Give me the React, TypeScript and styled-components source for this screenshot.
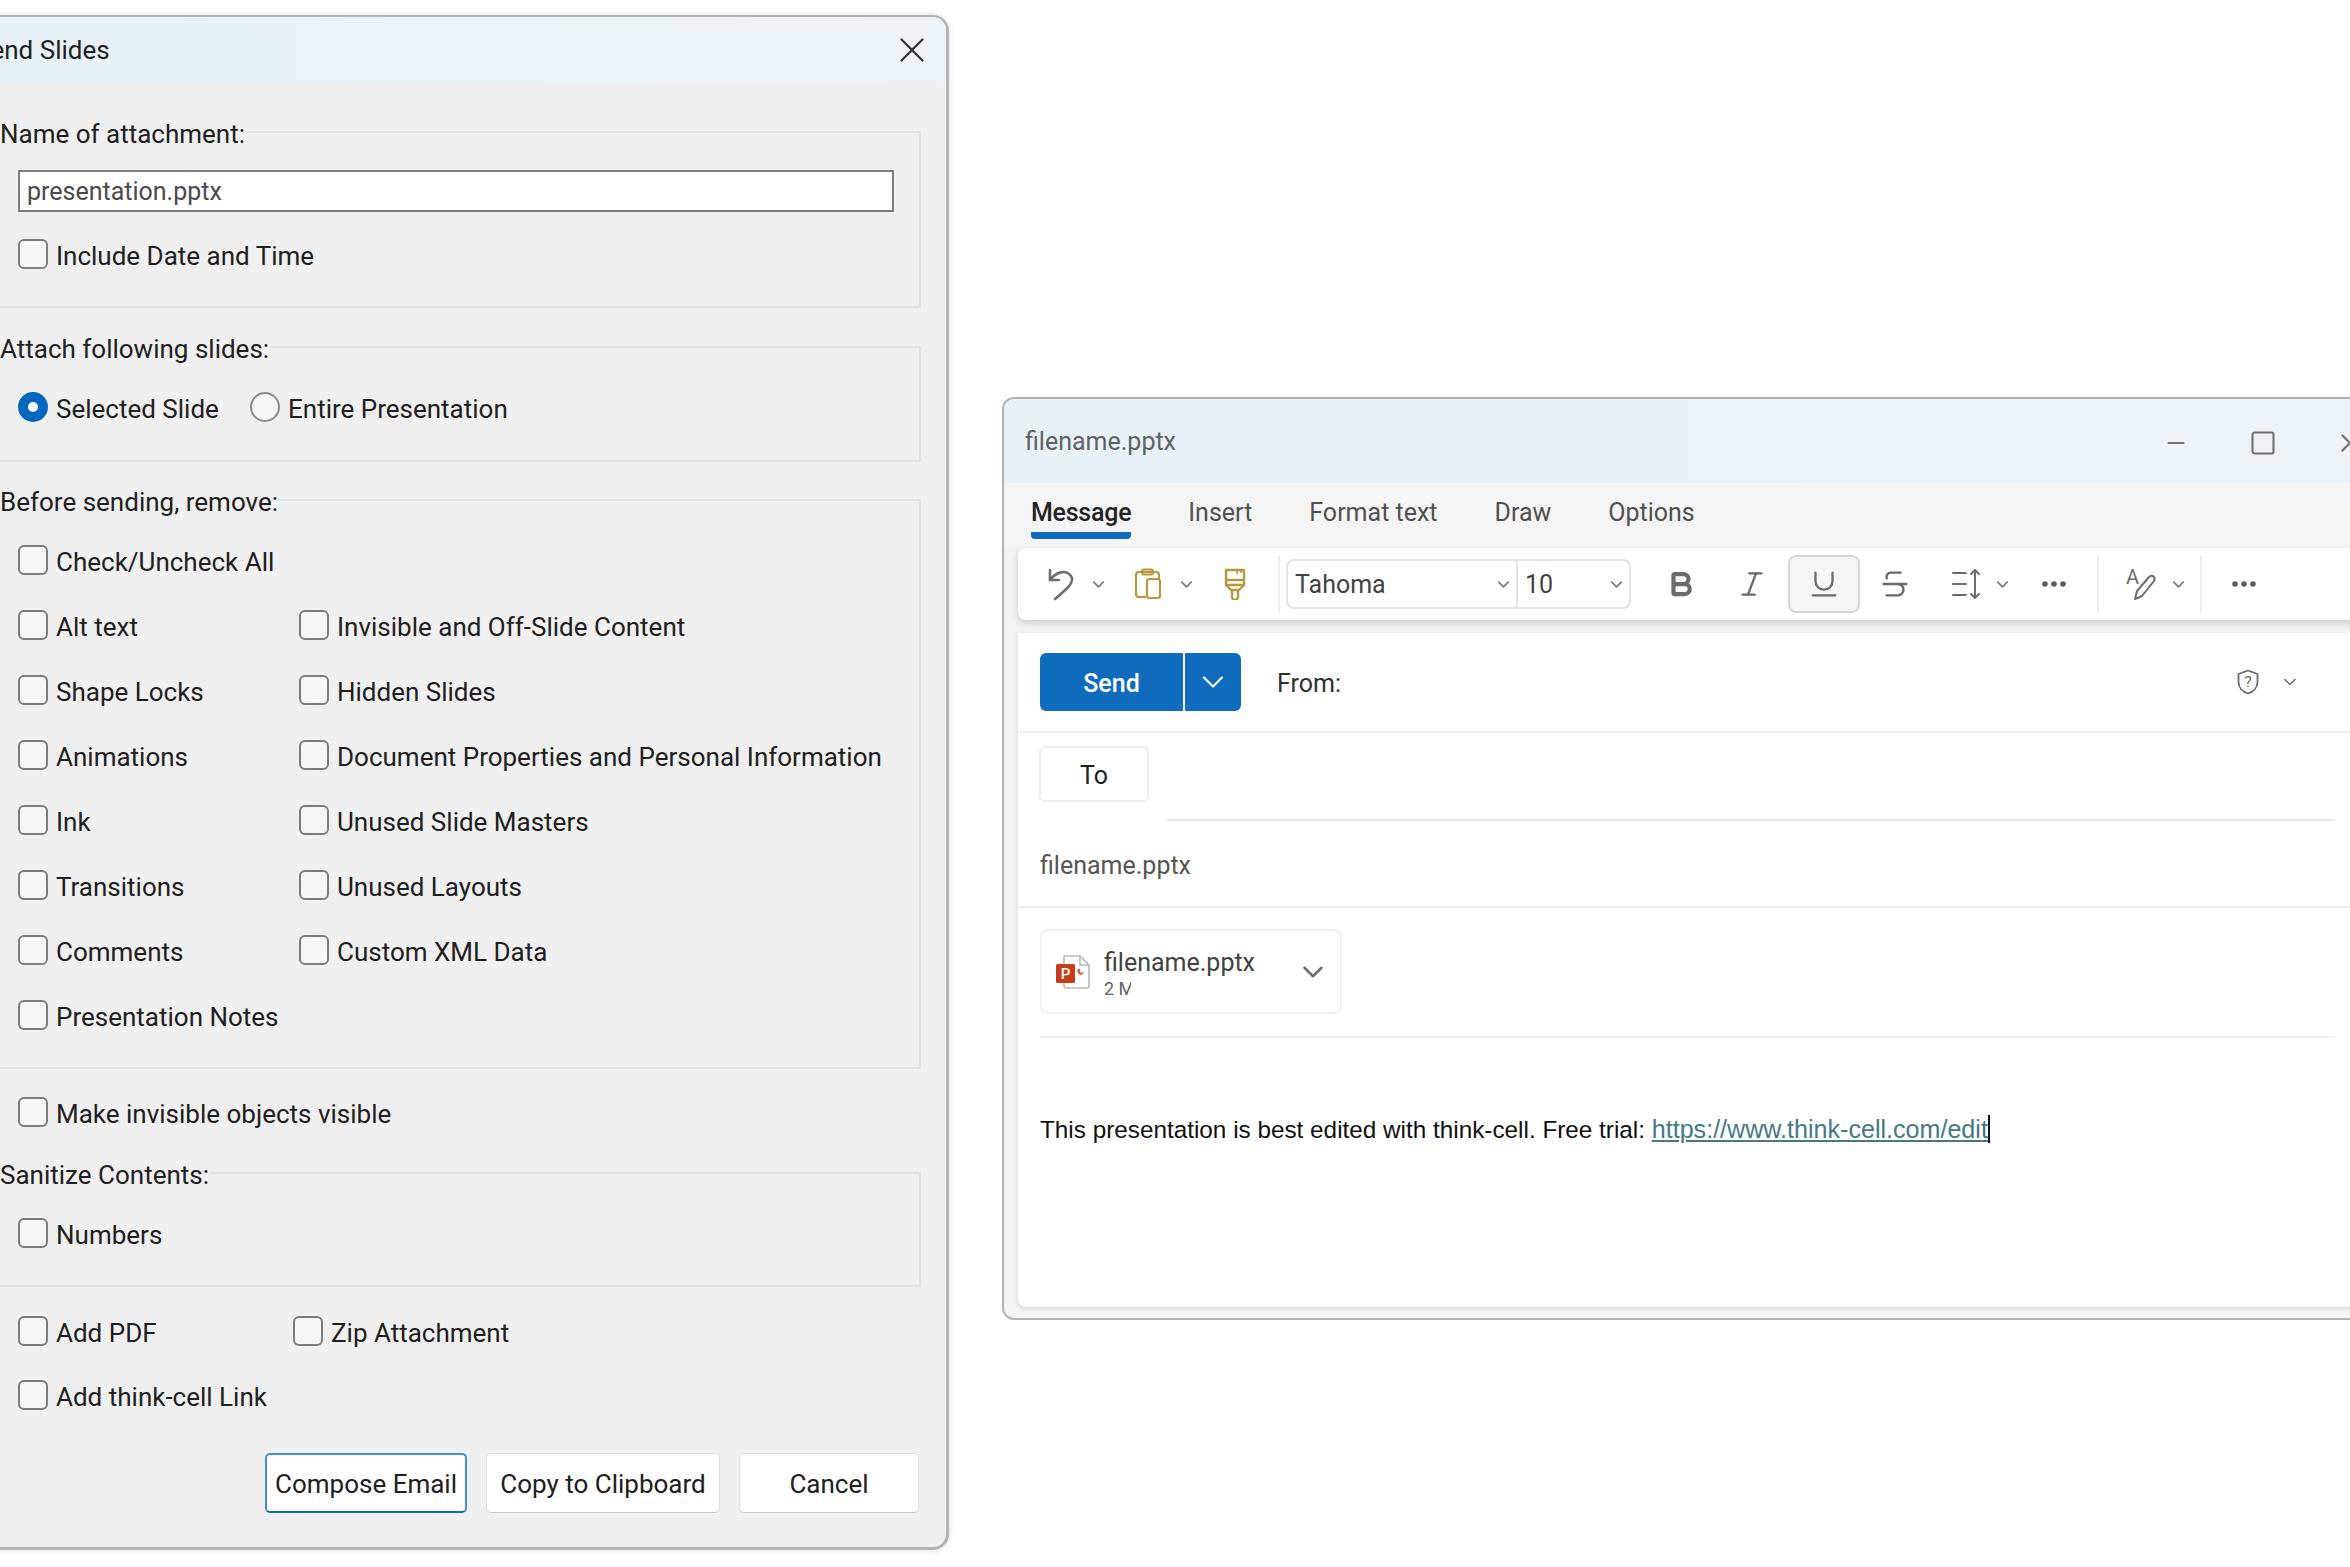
import React from "react";
import styled, { createGlobalStyle } from "styled-components";
import { Bold, ChevronDown, Italic, Minus, Square, Strikethrough, Underline, X } from "lucide-react";

const GlobalStyle = createGlobalStyle`
  html, body {
    margin: 0;
    background: #fff;
  }
  * {
    box-sizing: border-box;
  }
`;

const Desktop = styled.div`
  position: relative;
  width: 2350px;
  height: 1567px;
  overflow: hidden;
  background: #fff;
  font-family: Roboto, "Liberation Sans", sans-serif;
  color: #202020;
`;

/* ---- Send Slides dialog ---- */

const Dialog = styled.section`
  position: absolute;
  left: -60px;
  top: 15px;
  width: 1009px;
  height: 1535px;
  background: #f0f0f0;
  border: 2px solid #b3b3b3;
  border-right-width: 3px;
  border-bottom-width: 3px;
  border-radius: 16px;
  box-shadow: 0 0 6px rgba(0, 0, 0, 0.14);
  overflow: hidden;
`;

const DialogTitle = styled.header`
  display: flex;
  align-items: center;
  justify-content: space-between;
  height: 65px;
  padding: 0 13px 0 33px;
  background: linear-gradient(90deg, #e6f2f8, #edf4f9);
  font-size: 26px;
  line-height: 58px;
`;

const DialogBody = styled.div`
  padding-left: 26px;
  padding-right: 25px;
`;

const Group = styled.fieldset<{ $height: number; $top: number }>`
  margin: ${(p) => p.$top}px 0 0;
  padding: 0 0 0 48px;
  height: ${(p) => p.$height}px;
  min-width: 0;
  border: 2px solid #e2e2e2;
`;

const GroupLegend = styled.legend`
  margin-left: -18px;
  padding: 0;
  height: 36px;
  line-height: 41px;
  font-size: 26px;
`;

const NameInput = styled.input`
  display: block;
  margin-top: 20px;
  width: 876px;
  height: 42px;
  padding: 0 7px;
  border: 2px solid #7d7d7d;
  background: #fff;
  color: #4a4a4a;
  font: 25px Roboto, "Liberation Sans", sans-serif;
  outline: none;
`;

const Row = styled.div<{ $top?: number; $first?: number }>`
  display: grid;
  grid-template-columns: ${(p) => p.$first ?? 281}px auto;
  justify-content: start;
  margin-top: ${(p) => p.$top ?? 0}px;
`;

const Option = styled.label`
  display: flex;
  align-items: center;
  gap: 8px;
  height: 30px;
  font-size: 26px;
  white-space: nowrap;
  span {
    position: relative;
    top: 2px;
  }
`;

const CheckBox = styled.input.attrs({ type: "checkbox" })`
  appearance: none;
  flex: none;
  margin: 0;
  width: 30px;
  height: 30px;
  border: 2px solid #7c7c7c;
  border-radius: 6px;
  background: #f6f6f6;
`;

const RadioDot = styled.input.attrs({ type: "radio" })`
  appearance: none;
  flex: none;
  margin: 0;
  width: 30px;
  height: 30px;
  border: 2px solid #8a8a8a;
  border-radius: 50%;
  background: #f6f6f6;
  &:checked {
    border: 10px solid #0067c0;
    background: #fff;
  }
`;

const Rows = styled.div<{ $top: number; $gap: number }>`
  display: flex;
  flex-direction: column;
  gap: ${(p) => p.$gap}px;
  padding-top: ${(p) => p.$top}px;
`;

const FooterOptions = styled(Rows)`
  padding-left: 50px;
`;

const DialogActions = styled.div`
  display: flex;
  justify-content: flex-end;
  gap: 19px;
  margin-top: 43px;
  padding-right: 2px;
`;

const ActionButton = styled.button<{ $width: number; $primary?: boolean }>`
  width: ${(p) => p.$width}px;
  height: 60px;
  padding: 2px 0 0;
  background: #fff;
  border: ${(p) => (p.$primary ? "2px solid #3d8fd6" : "1px solid #dedede")};
  border-bottom-color: ${(p) => (p.$primary ? "#0f6cbd" : "#c8c8c8")};
  border-radius: 5px;
  color: #202020;
  font: 26px Roboto, "Liberation Sans", sans-serif;
`;

/* ---- Outlook compose window ---- */

const MailWindow = styled.section`
  position: absolute;
  left: 1002px;
  top: 397px;
  width: 1400px;
  height: 923px;
  background: #f3f3f3;
  border: 2px solid #b3b3b3;
  border-radius: 12px;
  overflow: hidden;
`;

const MailTitle = styled.header`
  display: flex;
  align-items: center;
  justify-content: space-between;
  height: 84px;
  padding: 0 7px 0 21px;
  background: linear-gradient(90deg, #e8f2f8, #ecf3f9);
  color: #616161;
  font-size: 25px;
`;

const WindowControls = styled.div`
  display: flex;
  padding-top: 4px;
  color: #707070;
`;

const WindowControl = styled.span`
  display: flex;
  align-items: center;
  justify-content: center;
  width: 87px;
  height: 40px;
`;

const Tabs = styled.nav`
  display: flex;
  height: 65px;
  padding-left: 27px;
  gap: 57px;
  background: #f5f5f5;
`;

const Tab = styled.div<{ $active?: boolean }>`
  height: 56px;
  padding-top: 15px;
  line-height: 30px;
  font-size: 25px;
  font-weight: ${(p) => (p.$active ? 500 : 400)};
  letter-spacing: ${(p) => (p.$active ? "-0.25px" : "0")};
  color: ${(p) => (p.$active ? "#242424" : "#505050")};
  border-bottom: 7px solid ${(p) => (p.$active ? "#0f6cbd" : "transparent")};
  border-radius: 0 0 4px 4px;
`;

const Toolbar = styled.div`
  display: flex;
  align-items: center;
  height: 72px;
  margin-left: 14px;
  padding-left: 18px;
  background: #fff;
  border-radius: 8px 0 0 8px;
  box-shadow: 0 3px 7px rgba(0, 0, 0, 0.16);
  color: #6b6b6b;
`;

const Slot = styled.span<{ $w: number; $ml?: number }>`
  display: flex;
  flex: none;
  align-items: center;
  justify-content: center;
  width: ${(p) => p.$w}px;
  margin-left: ${(p) => p.$ml ?? 0}px;
`;

const PressedSlot = styled(Slot)`
  height: 58px;
  background: #f5f5f5;
  border: 2px solid #d4d4d4;
  border-radius: 8px;
`;

const ToolDivider = styled.span<{ $ml: number }>`
  flex: none;
  width: 2px;
  height: 57px;
  margin-left: ${(p) => p.$ml}px;
  background: #ececec;
`;

const FontPicker = styled.div`
  display: flex;
  flex: none;
  width: 345px;
  height: 50px;
  margin-left: 6px;
  border: 2px solid #e4e4e4;
  border-radius: 8px;
  color: #424242;
  font-size: 25px;
`;

const FontField = styled.div<{ $w: number; $line?: boolean }>`
  display: flex;
  align-items: center;
  justify-content: space-between;
  width: ${(p) => p.$w}px;
  padding: 0 3px 0 7px;
  border-right: ${(p) => (p.$line ? "2px solid #e4e4e4" : "none")};
`;

const ComposePane = styled.div`
  height: 674px;
  margin: 13px 0 0 14px;
  background: #fff;
  border-radius: 0 0 0 8px;
  box-shadow: 0 2px 4px rgba(0, 0, 0, 0.12);
`;

const SendRow = styled.div`
  display: flex;
  align-items: center;
  height: 100px;
  padding: 0 100px 0 22px;
  border-bottom: 2px solid #ececec;
`;

const SendButton = styled.div`
  display: flex;
  height: 58px;
  width: 201px;
  background: #0f6cbd;
  border-radius: 6px;
  color: #fff;
  font-size: 25px;
  font-weight: 500;
`;

const SendLabel = styled.div`
  display: flex;
  align-items: center;
  justify-content: center;
  width: 145px;
  padding-top: 2px;
  border-right: 2px solid #fff;
`;

const SendMenu = styled.div`
  display: flex;
  flex: 1;
  align-items: center;
  justify-content: center;
`;

const FromLabel = styled.div`
  margin-left: 36px;
  padding-top: 2px;
  font-size: 25px;
  color: #303030;
`;

const SecurityGroup = styled.div`
  display: flex;
  align-items: center;
  gap: 21px;
  margin-left: auto;
  color: #6b6b6b;
`;

const ToRow = styled.div`
  display: flex;
  height: 88px;
  padding: 13px 65px 0 21px;
`;

const ToButton = styled.div`
  display: flex;
  align-items: center;
  justify-content: center;
  width: 110px;
  height: 56px;
  padding-top: 2px;
  border: 2px solid #ececec;
  border-radius: 6px;
  font-size: 25px;
`;

const ToField = styled.div`
  flex: 1;
  margin: 0 0 0 18px;
  height: 75px;
  border-bottom: 2px solid #e8e8e8;
`;

const SubjectRow = styled.div`
  display: flex;
  align-items: center;
  height: 87px;
  padding: 3px 0 0 22px;
  border-bottom: 2px solid #ececec;
  color: #555;
  font-size: 25px;
`;

const AttachmentRow = styled.div`
  height: 130px;
  margin: 0 65px 0 22px;
  padding-top: 21px;
  border-bottom: 2px solid #f0f0f0;
`;

const AttachmentCard = styled.div`
  display: flex;
  align-items: center;
  width: 302px;
  height: 85px;
  padding: 0 10px 0 14px;
  border: 2px solid #f1f1f1;
  border-radius: 8px;
  color: #6e6e6e;
`;

const AttachmentText = styled.div`
  flex: 1;
  margin-left: 14px;
  padding-top: 5px;
`;

const AttachmentName = styled.div`
  font-size: 25px;
  line-height: 30px;
  color: #424242;
`;

const AttachmentSize = styled.div`
  width: 27px;
  overflow: hidden;
  white-space: nowrap;
  font-size: 18px;
  line-height: 22px;
  color: #616161;
`;

const MessageBody = styled.div`
  padding: 76px 0 0 22px;
  font-family: "Liberation Sans", Arial, sans-serif;
  font-size: 24.3px;
  line-height: 30px;
  color: #111;
`;

const TrialLink = styled.a`
  font-size: 25.1px;
  color: #467886;
  text-decoration: underline;
  border-right: 2px solid #111;
`;

/* ---- drawn icons ---- */

const UndoIcon = () => (
  <svg width="30" height="36" viewBox="0 0 30 36" fill="none" stroke="#6f6f6f" strokeWidth="2.6" strokeLinecap="round" strokeLinejoin="round">
    <path d="M4 4V14H13" />
    <path d="M4 14C10 6 20 3 25 10C29 16 22 22 9 33" />
  </svg>
);

const ClipboardIcon = () => (
  <svg width="28" height="32" viewBox="0 0 28 32" fill="none" stroke="#b8983c" strokeWidth="2.2" strokeLinejoin="round">
    <path d="M12 29H5a3 3 0 0 1-3-3V7a3 3 0 0 1 3-3h17a3 3 0 0 1 3 3v4" />
    <rect x="8" y="1.500" width="11" height="5" rx="2" />
    <rect x="13" y="11" width="13" height="19" rx="2.500" />
  </svg>
);

const BrushIcon = () => (
  <svg width="22" height="32" viewBox="0 0 22 32" fill="none" stroke="#b8983c" strokeWidth="2.400" strokeLinejoin="round">
    <path d="M2 2H20V17H2Z" />
    <path d="M2 12H20" />
    <path d="M13 2V6M17 2V5" strokeWidth="1.600" />
    <path d="M2 17L7 22H15L20 17" />
    <path d="M8 22V29a3 3 0 0 0 6 0V22" />
  </svg>
);

const SpacingIcon = () => (
  <svg width="30" height="32" viewBox="0 0 30 32" fill="none" stroke="#6b6b6b" strokeWidth="2" strokeLinecap="round" strokeLinejoin="round">
    <path d="M2 5H15M2 16H15M2 27H15" />
    <path d="M24 2V30M20 6L24 2L28 6M20 26L24 30L28 26" />
  </svg>
);

const DotsIcon = () => (
  <svg width="26" height="8" viewBox="0 0 26 8" fill="#5c5c5c">
    <circle cx="4" cy="4" r="2.800" />
    <circle cx="13" cy="4" r="2.800" />
    <circle cx="22" cy="4" r="2.800" />
  </svg>
);

const StylesIcon = () => (
  <svg width="32" height="36" viewBox="0 0 32 36">
    <text x="0" y="18" fontSize="20" fontFamily="Roboto, sans-serif" fill="#6b6b6b">A</text>
    <path d="M9 33L11 25L23 11C26 8 30 11 28 15L16 30Z" fill="none" stroke="#6b6b6b" strokeWidth="2" strokeLinejoin="round" />
  </svg>
);

const ShieldIcon = () => (
  <svg width="22" height="26" viewBox="0 0 22 26" fill="none">
    <path d="M11 1.500L20.500 5V13C20.500 19 16 23 11 24.500C6 23 1.500 19 1.500 13V5Z" stroke="#6b6b6b" strokeWidth="1.800" strokeLinejoin="round" />
    <text x="11" y="18" fontSize="15" textAnchor="middle" fontFamily="Roboto, sans-serif" fill="#6b6b6b">?</text>
  </svg>
);

const PowerPointIcon = () => (
  <svg width="34" height="34" viewBox="0 0 34 34">
    <path d="M8 1H24L33 10V31a2 2 0 0 1-2 2H10a2 2 0 0 1-2-2Z" fill="#fff" stroke="#b9b9b9" strokeWidth="1.600" />
    <path d="M24 1V10H33" fill="none" stroke="#b9b9b9" strokeWidth="1.600" />
    <rect x="0" y="9" width="19" height="19" rx="1.500" fill="#c43e1c" />
    <text x="9.500" y="24" fontSize="15" textAnchor="middle" fontFamily="Roboto, sans-serif" fontWeight="500" fill="#fff">P</text>
    <path d="M22 14a3.500 3.500 0 1 0 6 3.500h-4V13.500Z" fill="#e8593a" />
  </svg>
);

const ToolChevron = () => <ChevronDown size={19} strokeWidth={2} color="#777" />;

const Check = ({ label }: { label: string }) => (
  <Option>
    <CheckBox />
    <span>{label}</span>
  </Option>
);

const removeRows: [string, string?][] = [
  ["Check/Uncheck All"],
  ["Alt text", "Invisible and Off-Slide Content"],
  ["Shape Locks", "Hidden Slides"],
  ["Animations", "Document Properties and Personal Information"],
  ["Ink", "Unused Slide Masters"],
  ["Transitions", "Unused Layouts"],
  ["Comments", "Custom XML Data"],
  ["Presentation Notes"],
];

const App = () => (
  <Desktop>
    <GlobalStyle />
    <Dialog>
      <DialogTitle>
        Send Slides
        <X size={42} strokeWidth={1.3} color="#333" />
      </DialogTitle>
      <DialogBody>
        <Group $top={32} $height={194}>
          <GroupLegend>Name of attachment:</GroupLegend>
          <NameInput defaultValue="presentation.pptx" />
          <Row $top={27}>
            <Check label="Include Date and Time" />
          </Row>
        </Group>
        <Group $top={21} $height={133}>
          <GroupLegend>Attach following slides:</GroupLegend>
          <Row $top={27} $first={232}>
            <Option>
              <RadioDot name="scope" defaultChecked />
              <span>Selected Slide</span>
            </Option>
            <Option>
              <RadioDot name="scope" />
              <span>Entire Presentation</span>
            </Option>
          </Row>
        </Group>
        <Group $top={20} $height={587}>
          <GroupLegend>Before sending, remove:</GroupLegend>
          <Rows $top={27} $gap={35}>
            {removeRows.map(([left, right]) => (
              <Row key={left}>
                <Check label={left} />
                {right && <Check label={right} />}
              </Row>
            ))}
          </Rows>
        </Group>
        <FooterOptions $top={28} $gap={0}>
          <Check label="Make invisible objects visible" />
        </FooterOptions>
        <Group $top={28} $height={132}>
          <GroupLegend>Sanitize Contents:</GroupLegend>
          <Row $top={27}>
            <Check label="Numbers" />
          </Row>
        </Group>
        <FooterOptions $top={29} $gap={34}>
          <Row $first={275}>
            <Check label="Add PDF" />
            <Check label="Zip Attachment" />
          </Row>
          <Check label="Add think-cell Link" />
        </FooterOptions>
        <DialogActions>
          <ActionButton $width={202} $primary>Compose Email</ActionButton>
          <ActionButton $width={234}>Copy to Clipboard</ActionButton>
          <ActionButton $width={180}>Cancel</ActionButton>
        </DialogActions>
      </DialogBody>
    </Dialog>

    <MailWindow>
      <MailTitle>
        filename.pptx
        <WindowControls>
          <WindowControl><Minus size={26} strokeWidth={1.8} /></WindowControl>
          <WindowControl><Square size={28} strokeWidth={1.8} /></WindowControl>
          <WindowControl><X size={30} strokeWidth={1.8} /></WindowControl>
        </WindowControls>
      </MailTitle>
      <Tabs>
        <Tab $active>Message</Tab>
        <Tab>Insert</Tab>
        <Tab>Format text</Tab>
        <Tab>Draw</Tab>
        <Tab>Options</Tab>
      </Tabs>
      <Toolbar>
        <Slot $w={50}><UndoIcon /></Slot>
        <Slot $w={24}><ToolChevron /></Slot>
        <Slot $w={50} $ml={13}><ClipboardIcon /></Slot>
        <Slot $w={26}><ToolChevron /></Slot>
        <Slot $w={40} $ml={16}><BrushIcon /></Slot>
        <ToolDivider $ml={23} />
        <FontPicker>
          <FontField $w={230} $line>
            Tahoma
            <ToolChevron />
          </FontField>
          <FontField $w={111}>
            10
            <ToolChevron />
          </FontField>
        </FontPicker>
        <Slot $w={40} $ml={30}><Bold size={30} strokeWidth={3.4} /></Slot>
        <Slot $w={40} $ml={31}><Italic size={32} strokeWidth={1.8} /></Slot>
        <PressedSlot $w={72} $ml={16}><Underline size={34} strokeWidth={1.6} /></PressedSlot>
        <Slot $w={40} $ml={15}><Strikethrough size={34} strokeWidth={1.7} /></Slot>
        <Slot $w={40} $ml={31}><SpacingIcon /></Slot>
        <Slot $w={24} $ml={4}><ToolChevron /></Slot>
        <Slot $w={40} $ml={20}><DotsIcon /></Slot>
        <ToolDivider $ml={23} />
        <Slot $w={40} $ml={23}><StylesIcon /></Slot>
        <Slot $w={24} $ml={4}><ToolChevron /></Slot>
        <ToolDivider $ml={10} />
        <Slot $w={40} $ml={22}><DotsIcon /></Slot>
      </Toolbar>
      <ComposePane>
        <SendRow>
          <SendButton>
            <SendLabel>Send</SendLabel>
            <SendMenu><ChevronDown size={36} strokeWidth={1.4} /></SendMenu>
          </SendButton>
          <FromLabel>From:</FromLabel>
          <SecurityGroup>
            <ShieldIcon />
            <ChevronDown size={20} strokeWidth={1.8} />
          </SecurityGroup>
        </SendRow>
        <ToRow>
          <ToButton>To</ToButton>
          <ToField />
        </ToRow>
        <SubjectRow>filename.pptx</SubjectRow>
        <AttachmentRow>
          <AttachmentCard>
            <PowerPointIcon />
            <AttachmentText>
              <AttachmentName>filename.pptx</AttachmentName>
              <AttachmentSize>2 MB</AttachmentSize>
            </AttachmentText>
            <ChevronDown size={34} strokeWidth={1.8} />
          </AttachmentCard>
        </AttachmentRow>
        <MessageBody>
          This presentation is best edited with think-cell. Free trial:{" "}
          <TrialLink href="#">https://www.think-cell.com/edit</TrialLink>
        </MessageBody>
      </ComposePane>
    </MailWindow>
  </Desktop>
);

export default App;
